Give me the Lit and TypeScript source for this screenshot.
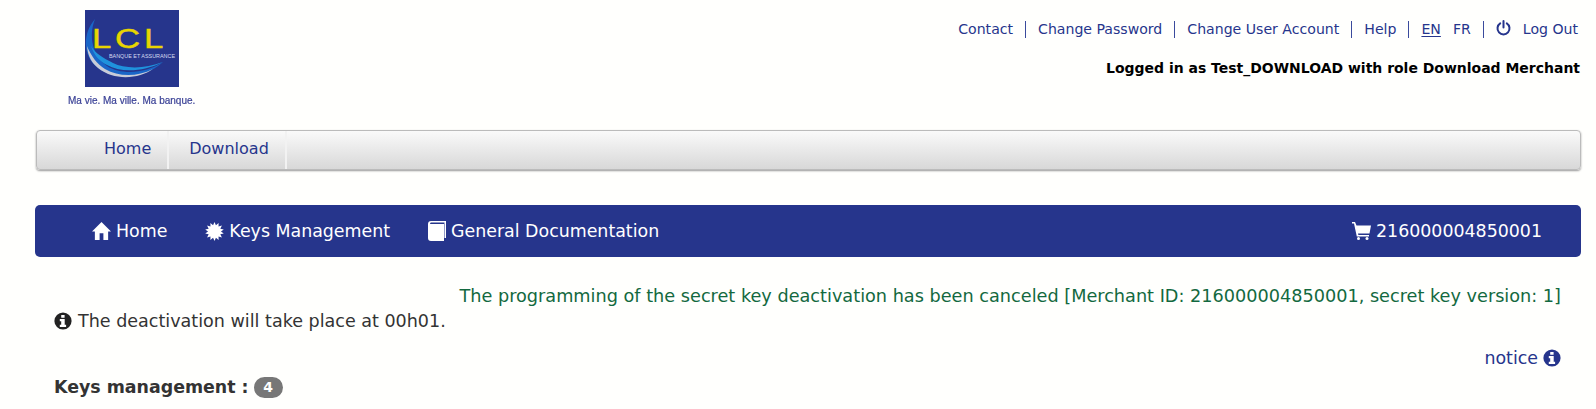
import { LitElement, html, css, svg } from "lit";
import { customElement } from "lit/decorators.js";

const infoIcon = () => svg`<svg viewBox="0 0 18 18" width="18" height="18"><circle cx="9" cy="9" r="8.6" fill="currentColor"/><rect x="7.200" y="3" width="3.400" height="2.800" rx=".5" fill="#fff"/><path d="M5.800 7h4.900v5.800h1.400v2.200H5.800v-2.200h1.400V9.200H5.800z" fill="#fff"/></svg>`;

const burst = (() => {
  const n = 14;
  const pts: string[] = [];
  for (let i = 0; i < n * 2; i++) {
    const r = i % 2 === 0 ? 10 : 6.8;
    const a = (Math.PI * i) / n;
    pts.push(`${(10 + r * Math.sin(a)).toFixed(2)},${(10 - r * Math.cos(a)).toFixed(2)}`);
  }
  return pts.join(" ");
})();

@customElement("app-root")
export class AppRoot extends LitElement {
  static styles = css`
    :host { display: block; height: 409px; overflow: hidden; background: #fffffd; font-family: "DejaVu Sans", Verdana, sans-serif; color: #333; }
    .header { display: flex; justify-content: space-between; height: 130px; padding: 0 16px 0 68px; box-sizing: border-box; }
    .logo { display: flex; flex-direction: column; align-items: flex-start; padding-top: 10px; filter: blur(.35px); }
    .logo svg { display: block; margin-left: 17px; overflow: visible; }
    .tag { font: 10px "Liberation Sans", Arial, sans-serif; -webkit-text-stroke: .2px #3b4296; color: #3b4296; margin-top: 8px; line-height: 12px; }
    .user { display: flex; flex-direction: column; align-items: flex-end; padding-top: 20px; }
    .links { display: flex; align-items: center; font-size: 14.1px; line-height: 18px; color: #26358c; padding-right: 2px; }
    .links span.sep { width: 1px; height: 17px; background: #3a4a9c; margin: 0 12px; }
    .links .fr { margin-left: 12px; }
    .links u { text-underline-offset: 2px; }
    .links svg { margin: -2px 12px 0 0; display: block; }
    .logged { font-size: 13.970px; font-weight: bold; color: #000; margin-top: 21px; line-height: 18px; }
    .menu { display: flex; height: 40px; margin: 0 15px 0 36px; box-sizing: border-box; border: 1px solid #bbb; border-radius: 4px; background: linear-gradient(#fafafa, #d8d8d8); box-shadow: 0 1px 2px #999; padding-left: 30px; }
    .menu a { display: flex; align-items: center; font-size: 16px; color: #26358c; padding: 0 16px 3px 20px; border-right: 2px solid #f2f2f2; }
    .menu a:first-child { padding: 0 16px 3px 37px; }
    .bar { display: flex; justify-content: space-between; align-items: center; height: 52px; margin: 35px 15px 0 35px; background: #26358c; border-radius: 5px; color: #fff; font-size: 17.400px; padding: 0 39px 0 57px; }
    .bar div { display: flex; align-items: center; }
    .bar .item { margin-right: 38px; gap: 5px; }
    .bar .cart { gap: 5px; }
    .bar svg { display: block; }
    .content { padding: 0 35px 0 54px; }
    .ok { text-align: right; color: #13693f; font-size: 17.680px; line-height: 20px; margin-top: 29px; white-space: nowrap; }
    .info { display: flex; align-items: center; gap: 6px; font-size: 17.550px; line-height: 20px; margin-top: 5px; }
    .info svg { color: #222; }
    .notice { display: flex; justify-content: flex-end; align-items: center; gap: 5px; color: #26358c; font-size: 17.400px; line-height: 20px; margin-top: 17px; }
    .keys { display: flex; align-items: center; gap: 5px; font-size: 17.400px; font-weight: bold; line-height: 22px; margin-top: 8px; }
    .badge { background: #777; color: #fff; font-size: 14px; border-radius: 11px; height: 21px; line-height: 21px; width: 29px; text-align: center; }
  `;

  render() {
    return html`
      <div class="header">
        <div class="logo">
          <svg width="94" height="77" viewBox="0 0 94 77">
            <rect width="94" height="77" fill="#26358c"/>
            <path d="M10 9C-3 24-2 46 12 57 28 71 58 70 78 52 60 64 36 65 22 56 8 46 3 27 10 9Z" fill="#1a66c8"/>
            <path d="M2 36C3 47 7 53 13 58 29 71 54 69 68 59 52 67 34 67 20 59 12 54 6 46 2 36Z" fill="#c8cbd8"/>
            <path d="M6 36C9 45 14 51 22 55 36 63 58 62 78 52 60 59 40 59 28 53 18 48 10 43 6 36Z" fill="#1f92dc"/>
            <text x="7" y="38" font-family="Liberation Sans, sans-serif" font-size="28" letter-spacing="3" fill="#e8d500" stroke="#e8d500" stroke-width=".4" textLength="75" lengthAdjust="spacingAndGlyphs">LCL</text>
            <text x="24" y="48" font-family="Liberation Sans, sans-serif" font-size="4.500" fill="#d6dbf0" textLength="66" lengthAdjust="spacingAndGlyphs">BANQUE ET ASSURANCE</text>
          </svg>
          <div class="tag">Ma vie. Ma ville. Ma banque.</div>
        </div>
        <div class="user">
          <div class="links">
            Contact<span class="sep"></span>Change Password<span class="sep"></span>Change User Account<span class="sep"></span>Help<span class="sep"></span><u>EN</u><span class="fr">FR</span><span class="sep"></span>
            <svg width="15" height="16" viewBox="0 0 15 16" fill="none" stroke="#26358c" stroke-width="2" stroke-linecap="round"><path d="M4.200 3.400a6 6 0 1 0 6.600 0"/><path d="M7.500 1v6.500"/></svg>Log Out
          </div>
          <div class="logged">Logged in as Test_DOWNLOAD with role Download Merchant</div>
        </div>
      </div>
      <div class="menu"><a>Home</a><a>Download</a></div>
      <div class="bar">
        <div>
          <div class="item"><svg width="19" height="18" viewBox="0 0 20 19" fill="#fff"><path d="M10 0 L20 10 H17 V19 H12 V12 H8 V19 H3 V10 H0Z"/></svg>Home</div>
          <div class="item"><svg width="19" height="19" viewBox="0 0 20 20" fill="#fff"><polygon points=${burst}/></svg>Keys Management</div>
          <div class="item"><svg width="18" height="20" viewBox="0 0 18 20" fill="#fff"><path d="M3 0H18V17H16.500V1.500H3.500C2.500 1.500 2 2.200 2 3H16V20H3C1 20 0 18.800 0 17V3C0 1.200 1.200 0 3 0Z"/></svg>General Documentation</div>
        </div>
        <div class="cart"><svg width="19" height="18" viewBox="0 0 19 18" fill="#fff"><path d="M0 0h3l1.500 3.500H19l-1.500 8H6l.4 1.500H17v1.500H4.800L2 1.500H0z"/><circle cx="6.500" cy="16.500" r="1.500"/><circle cx="15" cy="16.500" r="1.500"/></svg>216000004850001</div>
      </div>
      <div class="content">
        <div class="ok">The programming of the secret key deactivation has been canceled [Merchant ID: 216000004850001, secret key version: 1]</div>
        <div class="info">${infoIcon()}The deactivation will take place at 00h01.</div>
        <div class="notice">notice ${infoIcon()}</div>
        <div class="keys">Keys management : <span class="badge">4</span></div>
      </div>
    `;
  }
}
